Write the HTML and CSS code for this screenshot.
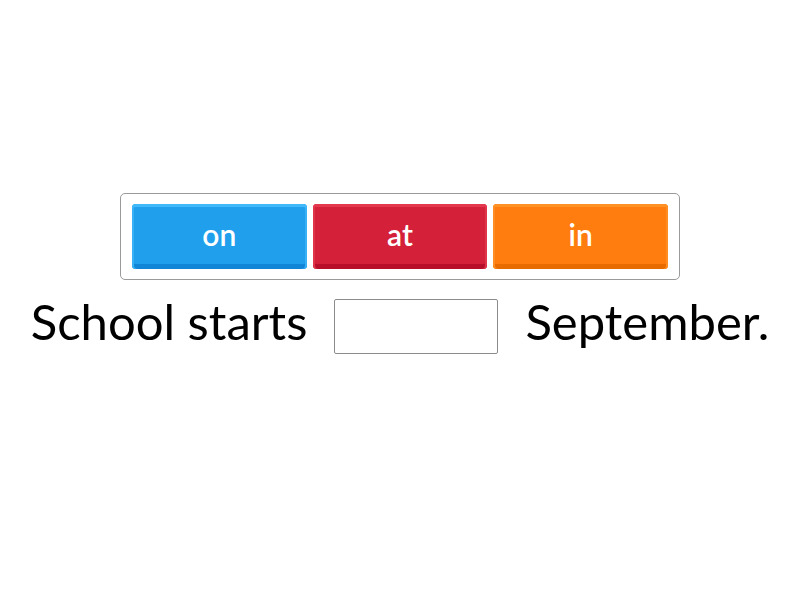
FILE: index.html
```html
<!DOCTYPE html>
<html lang="en">
<head>
    <meta charset="UTF-8">
    <title>School starts</title>
    <link rel="stylesheet" href="styles.css">
</head>
<body>
    <div class="page">
        <div class="bank">
            <div class="tile tile-blue">on</div>
            <div class="tile tile-red">at</div>
            <div class="tile tile-orange">in</div>
        </div>

        <div class="sentence">
            <span class="words">School starts</span>
            <span class="blank"></span>
            <span class="words">September.</span>
        </div>
    </div>
</body>
</html>
```

FILE: styles.css
```css
* {
    box-sizing: border-box;
    margin: 0;
    padding: 0;
}

body {
    font-family: Lato, "Open Sans", sans-serif;
    background: #ffffff;
    color: #000000;
}

.page {
    display: flex;
    flex-direction: column;
    align-items: center;
    padding-top: 193px;
}

.bank {
    width: 560px;
    height: 87px;
    display: flex;
    gap: 6px;
    padding: 10px 11px;
    border: 1px solid #9a9a9a;
    border-radius: 5px;
}

.tile {
    flex: 1;
    height: 65px;
    border-radius: 4px;
    display: flex;
    align-items: center;
    justify-content: center;
    color: #ffffff;
    font-size: 30px;
    font-weight: 600;
    padding-bottom: 5px;
}

.tile-blue {
    background: #20a0ec;
    box-shadow: inset 0 3px 0 #40b8fa, inset 2px 0 0 #36b0f6, inset -2px 0 0 #36b0f6, inset 0 -5px 0 #1186d6;
}

.tile-red {
    background: #d42039;
    box-shadow: inset 0 3px 0 #e4384e, inset 2px 0 0 #e0344b, inset -2px 0 0 #e0344b, inset 0 -5px 0 #b70f2a;
}

.tile-orange {
    background: #ff7c0f;
    box-shadow: inset 0 3px 0 #ff9125, inset 2px 0 0 #ff8d22, inset -2px 0 0 #ff8d22, inset 0 -5px 0 #e86b00;
}

.sentence {
    display: flex;
    align-items: center;
    gap: 27px;
    margin-top: 19px;
}

.words {
    font-size: 49px;
    line-height: 45px;
    padding-bottom: 10px;
}

.blank {
    width: 164px;
    height: 55px;
    border: 1px solid #8c8c8c;
    border-radius: 2px;
}
```
